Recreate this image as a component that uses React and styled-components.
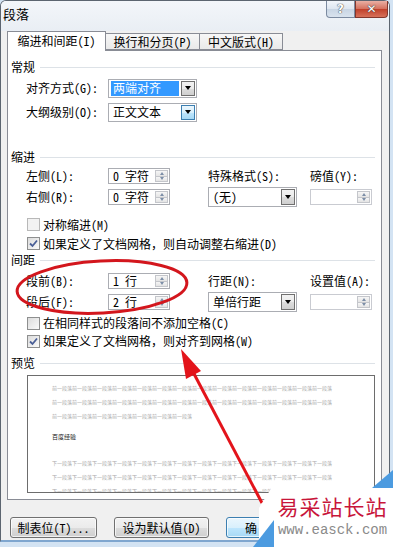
import React from 'react';
import styled, { createGlobalStyle } from 'styled-components';

const GlobalStyle = createGlobalStyle`
  html, body { margin: 0; padding: 0; }
  body {
    background: #d3e3f3;
    font-family: "Noto Sans Mono CJK SC", "Noto Sans CJK SC", "Liberation Sans", sans-serif;
    font-size: 12px;
    color: #000;
  }
`;

const Screen = styled.div`
  position: relative;
  width: 393px;
  height: 547px;
  overflow: hidden;
  background: #d3e3f3;
`;

const Dialog = styled.div`
  width: 390px;
  height: 542px;
  box-sizing: border-box;
  border: 1px solid #5c6570;
  border-bottom: 2px solid #7fa6cf;
  border-radius: 6px 6px 0 0;
  background: #f0f0f0;
  display: flex;
  flex-direction: column;
`;

const TitleBar = styled.div`
  height: 30px;
  display: flex;
  align-items: flex-start;
  padding: 0 1px 0 2px;
  background: linear-gradient(#f3f6fa, #e9eef4);
  border-radius: 5px 5px 0 0;
`;

const Title = styled.div`
  margin-top: 4px;
  line-height: 18px;
  font-size: 13px;
`;

const Caption = styled.div`
  margin-left: auto;
  display: flex;
`;

const CapButton = styled.div`
  height: 17px;
  width: ${p => p.$w}px;
  box-sizing: border-box;
  display: flex;
  align-items: center;
  justify-content: center;
  border: 1px solid ${p => (p.$close ? '#83372c' : '#7b8aa0')};
  border-top: none;
  border-radius: ${p => (p.$close ? '0 0 4px 0' : '0 0 0 4px')};
  background: ${p =>
    p.$close
      ? 'linear-gradient(#eab0a4, #d4705d 50%, #c0402a 51%, #d7715a)'
      : 'linear-gradient(#f1f5fa, #dde6f0 50%, #c8d5e4 51%, #d9e3ee)'};
  color: #fff;
  font-family: "DejaVu Sans", sans-serif;
  font-weight: bold;
  font-size: 12px;
  text-shadow: 0 0 1px #333, 0 0 1px #333;
`;

const TabRow = styled.div`
  height: 19px;
  display: flex;
  align-items: flex-end;
  padding-left: 6px;
  position: relative;
  z-index: 1;
`;

const Tab = styled.div`
  width: ${p => p.$w}px;
  height: ${p => (p.$active ? 20 : 17)}px;
  box-sizing: border-box;
  margin-bottom: ${p => (p.$active ? -1 : 0)}px;
  display: flex;
  align-items: center;
  justify-content: center;
  border: 1px solid #898c95;
  border-bottom: ${p => (p.$active ? 'none' : '1px solid #898c95')};
  border-left: ${p => (p.$first || p.$active ? '1px solid #898c95' : 'none')};
  background: ${p => (p.$active ? '#fff' : 'linear-gradient(#f7f7f7, #e9e9e9)')};
  font-size: 12px;
  line-height: 14px;
  padding-bottom: ${p => (p.$active ? 1 : 0)}px;
`;

const Panel = styled.div`
  margin-left: 6px;
  width: 375px;
  height: 450px;
  box-sizing: border-box;
  border: 1px solid #898c95;
  background: #fff;
  display: flex;
  flex-direction: column;
`;

const Header = styled.div`
  margin-top: ${p => p.$mt}px;
  height: 14px;
  display: flex;
  align-items: center;
  padding-left: 3px;
  margin-right: 6px;
  line-height: 14px;
  &::after {
    content: '';
    flex: 1;
    margin-left: 5px;
    border-top: 1px solid #dde2e7;
  }
`;

const Rows = styled.div`
  margin-top: ${p => p.$mt}px;
  padding-left: 18px;
  display: flex;
  flex-direction: column;
  gap: ${p => p.$gap}px;
`;

const Row = styled.div`
  display: grid;
  grid-template-columns: 82px 100px 102px 1fr;
  align-items: center;
  height: 20px;
  line-height: 14px;
`;

const Combo = styled.div`
  width: ${p => p.$w}px;
  height: ${p => p.$h}px;
  box-sizing: border-box;
  border: 1px solid #abadb3;
  background: #fff;
  display: flex;
  align-items: center;
  padding: 1px 1px 1px 2px;
`;

const ComboText = styled.div`
  flex: 1;
  height: 100%;
  display: flex;
  align-items: center;
  padding-left: 2px;
  margin-right: 2px;
  background: ${p => (p.$sel ? '#3399ff' : 'transparent')};
  color: ${p => (p.$sel ? '#fff' : '#000')};
`;

const DropBtn = styled.div`
  width: 14px;
  height: 100%;
  box-sizing: border-box;
  border: 1px solid ${p => (p.$hot ? '#3c7fb1' : '#707070')};
  background: ${p =>
    p.$hot
      ? 'linear-gradient(#eaf6fd, #d9f0fc 50%, #bee6fd 51%, #a7d9f5)'
      : 'linear-gradient(#f2f2f2, #ebebeb 50%, #dddddd 51%, #cfcfcf)'};
  display: flex;
  align-items: center;
  justify-content: center;
  &::after {
    content: '';
    border-left: 3.5px solid transparent;
    border-right: 3.5px solid transparent;
    border-top: 4px solid #000;
  }
`;

const Spin = styled.div`
  width: 62px;
  height: 16px;
  box-sizing: border-box;
  border: 1px solid ${p => (p.$off ? '#c9cbd1' : '#abadb3')};
  background: #fff;
  display: flex;
  align-items: center;
  padding: 1px;
`;

const SpinText = styled.div`
  flex: 1;
  padding-left: 3px;
  line-height: 14px;
`;

const SpinBtns = styled.div`
  width: 13px;
  height: 100%;
  display: flex;
  flex-direction: column;
`;

const SpinArrow = styled.div`
  flex: 1;
  box-sizing: border-box;
  border: 1px solid #c4c6cb;
  ${p => (p.$down ? 'border-top: none;' : '')}
  background: linear-gradient(#f6f6f6, #e4e4e4);
  display: flex;
  align-items: center;
  justify-content: center;
  &::after {
    content: '';
    border-left: 2.5px solid transparent;
    border-right: 2.5px solid transparent;
    ${p => (p.$down ? 'border-top: 3px solid #7c8ea7;' : 'border-bottom: 3px solid #7c8ea7;')}
  }
`;

const Checks = styled.div`
  margin-top: ${p => p.$mt}px;
  padding-left: 19px;
  display: flex;
  flex-direction: column;
`;

const CheckRow = styled.div`
  height: ${p => p.$h}px;
  display: flex;
  align-items: center;
  gap: 3px;
  line-height: 14px;
`;

const Box = styled.div`
  width: 13px;
  height: 13px;
  box-sizing: border-box;
  border: 1px solid ${p => (p.$off ? '#b8b8b8' : '#8e8f8f')};
  background: ${p => (p.$off ? '#f2f2f2' : 'linear-gradient(135deg, #dcdcdc, #fafafa)')};
  display: flex;
  align-items: center;
  justify-content: center;
`;

const Preview = styled.div`
  margin: 5px 6px 0 19px;
  height: 118px;
  box-sizing: border-box;
  border: 1px solid #6d6d6d;
  background: #fff;
  overflow: hidden;
  padding: 5px 0 0 24px;
`;

const PrevLine = styled.div`
  height: 14px;
  line-height: 14px;
  font-family: "Noto Sans CJK SC", sans-serif;
  white-space: nowrap;
  color: ${p => (p.$dark ? '#222' : '#a9a9a9')};
  margin-top: ${p => p.$mt || 0}px;
  font-size: ${p => (p.$dark ? 6 : 5)}px;
`;

const ButtonRow = styled.div`
  margin-top: 17px;
  padding-left: 9px;
  display: flex;
  gap: 17px;
`;

const Button = styled.div`
  width: ${p => p.$w}px;
  height: 21px;
  box-sizing: border-box;
  border: 1px solid ${p => (p.$def ? '#3c7fb1' : '#707070')};
  border-radius: 3px;
  background: ${p =>
    p.$def
      ? 'linear-gradient(#eaf6fd, #d9f0fc 50%, #bee6fd 51%, #a7d9f5)'
      : 'linear-gradient(#f2f2f2, #ebebeb 50%, #dddddd 51%, #cfcfcf)'};
  box-shadow: inset 0 0 0 1px rgba(255, 255, 255, 0.7);
  display: flex;
  align-items: center;
  justify-content: center;
  line-height: 14px;
`;

const Overlay = styled.svg`
  position: absolute;
  left: 0;
  top: 0;
  pointer-events: none;
`;

const Watermark = styled.div`
  position: absolute;
  right: 0;
  bottom: 0;
  width: 121px;
  height: 59px;
  display: flex;
  flex-direction: column;
  align-items: center;
`;

const MarkTitle = styled.div`
  margin-top: 4px;
  font-family: "Noto Sans CJK SC", serif;
  font-size: 21px;
  line-height: 28px;
  letter-spacing: 1px;
  color: #c8153a;
`;

const MarkUrl = styled.div`
  font-family: "Liberation Mono", monospace;
  font-size: 14px;
  line-height: 20px;
  color: #8a8a8a;
`;

const Combobox = ({ w, h, text, sel, hot }) => (
  <Combo $w={w} $h={h}>
    <ComboText $sel={sel}>{text}</ComboText>
    <DropBtn $hot={hot} />
  </Combo>
);

const Spinner = ({ text, off }) => (
  <Spin $off={off}>
    <SpinText>{text}</SpinText>
    <SpinBtns>
      <SpinArrow />
      <SpinArrow $down />
    </SpinBtns>
  </Spin>
);

const Check = ({ label, checked, off, h }) => (
  <CheckRow $h={h}>
    <Box $off={off}>
      {checked && (
        <svg width="9" height="9" viewBox="0 0 9 9">
          <path d="M1 4.5 L3.5 7 L8 1.5" fill="none" stroke="#4a5f97" strokeWidth="1.8" />
        </svg>
      )}
    </Box>
    <span>{label}</span>
  </CheckRow>
);

const before = '前一段落'.repeat(14);
const after = '下一段落'.repeat(14);

export default function App() {
  return (
    <Screen>
      <GlobalStyle />
      <Dialog>
        <TitleBar>
          <Title>段落</Title>
          <Caption>
            <CapButton $w={29}>?</CapButton>
            <CapButton $w={33} $close>✕</CapButton>
          </Caption>
        </TitleBar>
        <TabRow>
          <Tab $w={99} $active $first>缩进和间距(I)</Tab>
          <Tab $w={94}>换行和分页(P)</Tab>
          <Tab $w={83}>中文版式(H)</Tab>
        </TabRow>
        <Panel>
          <Header $mt={9}>常规</Header>
          <Rows $mt={4} $gap={4}>
            <Row>
              <span>对齐方式(G):</span>
              <Combobox w={89} h={19} text="两端对齐" sel />
            </Row>
            <Row>
              <span>大纲级别(O):</span>
              <Combobox w={89} h={19} text="正文文本" hot />
            </Row>
          </Rows>

          <Header $mt={28}>缩进</Header>
          <Rows $mt={2} $gap={1}>
            <Row>
              <span>左侧(L):</span>
              <Spinner text="0 字符" />
              <span>特殊格式(S):</span>
              <span>磅值(Y):</span>
            </Row>
            <Row>
              <span>右侧(R):</span>
              <Spinner text="0 字符" />
              <Combobox w={89} h={20} text="(无)" />
              <Spinner text="" off />
            </Row>
          </Rows>
          <Checks $mt={8}>
            <Check h={19} label="对称缩进(M)" off />
            <Check h={19} label="如果定义了文档网格，则自动调整右缩进(D)" checked />
          </Checks>

          <Header $mt={0}>间距</Header>
          <Rows $mt={4} $gap={1}>
            <Row>
              <span>段前(B):</span>
              <Spinner text="1 行" />
              <span>行距(N):</span>
              <span>设置值(A):</span>
            </Row>
            <Row>
              <span>段后(F):</span>
              <Spinner text="2 行" />
              <Combobox w={89} h={20} text="单倍行距" />
              <Spinner text="" off />
            </Row>
          </Rows>
          <Checks $mt={2}>
            <Check h={18} label="在相同样式的段落间不添加空格(C)" />
            <Check h={18} label="如果定义了文档网格，则对齐到网格(W)" checked />
          </Checks>

          <Header $mt={6}>预览</Header>
          <Preview>
            <PrevLine>{before}</PrevLine>
            <PrevLine>{before}</PrevLine>
            <PrevLine>{'前一段落'.repeat(7)}</PrevLine>
            <PrevLine $dark $mt={7}>百度经验</PrevLine>
            <PrevLine $mt={12}>{after}</PrevLine>
            <PrevLine>{after}</PrevLine>
            <PrevLine>{after}</PrevLine>
          </Preview>
        </Panel>
        <ButtonRow>
          <Button $w={87}>制表位(T)...</Button>
          <Button $w={95}>设为默认值(D)</Button>
          <Button $w={50} $def>确</Button>
        </ButtonRow>
      </Dialog>

      <Overlay width="393" height="547" viewBox="0 0 393 547">
        <ellipse cx="102" cy="287" rx="85" ry="26" transform="rotate(-3 102 287)"
          fill="none" stroke="#d3161d" strokeWidth="3" />
        <line x1="262" y1="503" x2="192" y2="370" stroke="#e3141b" strokeWidth="3" />
        <polygon points="181,349 201,371 186,379" fill="#e3141b" />
        <polygon points="259,508 272,487 393,487 393,547 259,547" fill="#fff" />
        <polygon points="253,547 274,520 274,547" fill="#4c9be0" />
        <polygon points="372,488 393,470 393,488" fill="#4c9be0" />
      </Overlay>
      <Watermark>
        <MarkTitle>易采站长站</MarkTitle>
        <MarkUrl>www.easck.com</MarkUrl>
      </Watermark>
    </Screen>
  );
}
